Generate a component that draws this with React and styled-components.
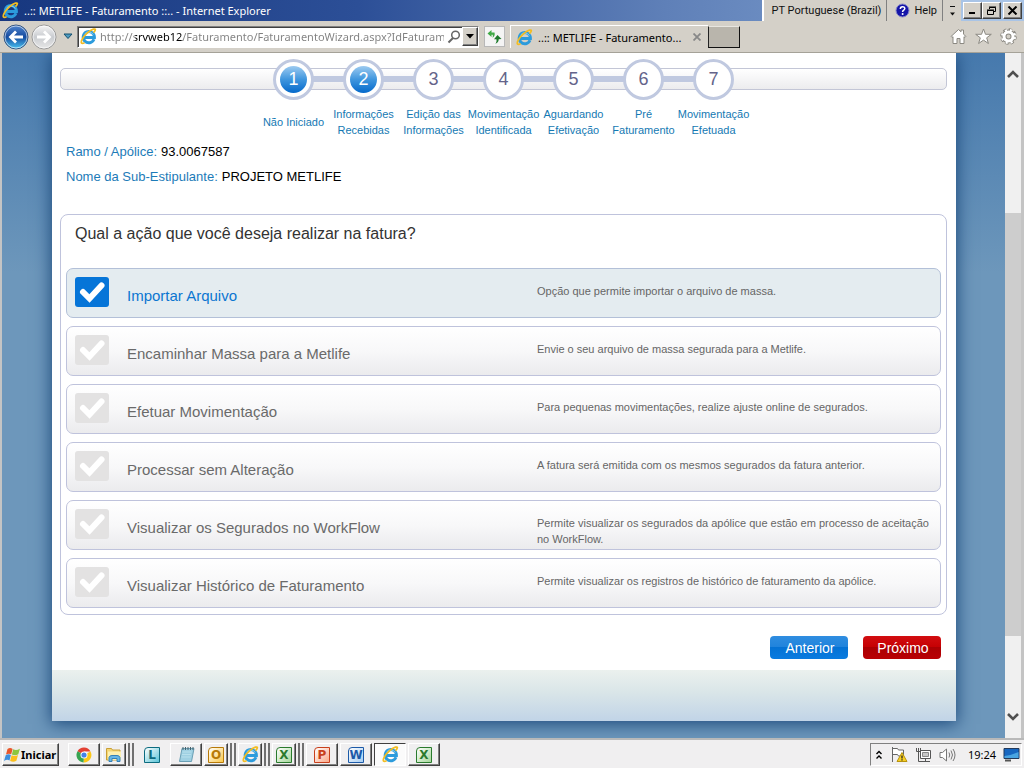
import React from 'react'
import styled, { createGlobalStyle, css } from 'styled-components'

const GlobalStyle = createGlobalStyle`
  * {
    box-sizing: border-box;
  }
  body {
    margin: 0;
    font-family: 'Liberation Sans', Arial, sans-serif;
    background: #d4d0c8;
  }
  button,
  input {
    font-family: inherit;
    margin: 0;
  }
  svg {
    display: block;
    flex: none;
  }
`

const chromeFont = css`
  font-family: 'Noto Sans', 'Open Sans', sans-serif;
  font-size: 11px;
`

const raised = css`
  border: 1px solid;
  border-color: #fff #404040 #404040 #fff;
  box-shadow: inset -1px -1px 0 #808080;
`

const Screen = styled.div`
  min-height: 100vh;
  display: flex;
  flex-direction: column;
`

/* Browser window */

const TitleBar = styled.header`
  height: 21px;
  display: flex;
  background: linear-gradient(90deg, #17377f, #2c4f97 35%, #5f80b8 65%, #88a9d6);
`

const WindowTitle = styled.div`
  ${chromeFont};
  flex: 1;
  display: flex;
  align-items: center;
  gap: 5px;
  padding-left: 2px;
  color: #fff;
  white-space: nowrap;
`

const LanguageBar = styled.div`
  display: flex;
  background: #d4d0c8;
  border-left: 2px solid #fff;
  font-family: Roboto, sans-serif;
  white-space: nowrap;
`

const LanguageItem = styled.button`
  display: flex;
  align-items: center;
  gap: 4px;
  padding: 0 5px 0 8px;
  border: 0;
  border-right: 1px solid #808080;
  background: none;
  font-size: 11px;
  color: #111;
`

const LanguageGrip = styled.button`
  width: 18px;
  display: grid;
  place-items: center;
  padding: 0;
  border: 0;
  background: none;
`

const WindowButtons = styled.div`
  display: flex;
  align-items: center;
  padding: 0 2px;
  background: #a9c4e6;
`

const WindowButton = styled.button`
  ${raised};
  width: 19px;
  height: 17px;
  display: grid;
  place-items: center;
  padding: 0;
  background: #d4d0c8;
  margin-left: ${p => (p.$apart ? '2px' : 0)};
`

const Toolbar = styled.div`
  ${chromeFont};
  height: 32px;
  display: flex;
  align-items: center;
  padding: 0 7px 0 2px;
  background: #d4d0c8;
  border-bottom: 1px solid #a5a298;
`

const NavButton = styled.button`
  width: 28px;
  height: 28px;
  padding: 0;
  border: 0;
  background: none;
`

const HistoryButton = styled.button`
  width: 19px;
  display: grid;
  place-items: center;
  padding: 0;
  border: 0;
  background: none;
`

const AddressBar = styled.div`
  flex: 0 1 402px;
  min-width: 0;
  height: 22px;
  display: flex;
  align-items: center;
  padding-left: 2px;
  background: #fff;
  border: 1px solid #808080;
  border-right-color: #fff;
  border-bottom-color: #fff;
  box-shadow: inset 1px 1px 0 #404040;
`

const AddressInput = styled.input`
  flex: 1;
  min-width: 0;
  height: 18px;
  margin: 0 2px 0 3px;
  padding: 0;
  border: 0;
  outline: 0;
  font-size: 11px;
  color: #777;
  background: linear-gradient(90deg, #808080 35px, #000 35px 83px, #808080 83px);
  background-clip: text;
  -webkit-text-fill-color: transparent;
`

const AddressButton = styled.button`
  ${raised};
  width: 16px;
  height: 19px;
  display: grid;
  place-items: center;
  padding: 0;
  background: #d4d0c8;
`

const PlainAddressButton = styled(AddressButton)`
  border: 0;
  box-shadow: none;
  background: none;
`

const RefreshButton = styled.button`
  width: 21px;
  height: 21px;
  display: grid;
  place-items: center;
  margin: 0 5px;
  padding: 0;
  border: 1px solid #b8b8b8;
  background: #f4f4f4;
`

const Tab = styled.div`
  width: 198px;
  height: 23px;
  display: flex;
  align-items: center;
  gap: 5px;
  padding: 0 7px 0 5px;
  border-top: 1px solid #fff;
  border-left: 1px solid #fff;
  color: #000;
  white-space: nowrap;
`

const TabTitle = styled.span`
  flex: 1;
`

const CloseTab = styled.button`
  padding: 0;
  border: 0;
  background: none;
`

const NewTab = styled.button`
  width: 32px;
  height: 22px;
  background: #b9b5ac;
  border: 1px solid;
  border-color: #e8e6e0 #111 #111 #222;
`

const ToolbarIcons = styled.div`
  display: flex;
  gap: 8px;
  margin-left: auto;
`

const IconButton = styled.button`
  padding: 0;
  border: 0;
  background: none;
`

const Viewport = styled.div`
  flex: 1;
  display: flex;
  border: solid #c4c4c4;
  border-width: 0 3px 0 2px;
`

const Backdrop = styled.main`
  flex: 1;
  min-width: 0;
  display: flex;
  padding: 0 49px 17px 50px;
  overflow: hidden;
  background: linear-gradient(#4679ad, #6d97bb 220px);
`

const ScrollBar = styled.div`
  width: 16px;
  display: flex;
  flex-direction: column;
  align-items: center;
  padding: 16px 0;
  background: #f0f0f0;
`

const ScrollTrack = styled.div`
  flex: 1;
  width: 100%;
  display: flex;
  flex-direction: column;
  padding: 134px 0 76px;
`

const ScrollThumb = styled.div`
  flex: 1;
  background: #cdcdcd;
`

/* Page */

const Sheet = styled.div`
  flex: 1;
  min-width: 0;
  display: flex;
  flex-direction: column;
  background: #fff;
  box-shadow: 0 2px 16px 1px #1d4a7c;
`

const SheetBody = styled.div`
  flex: 1;
  padding: 6px 9px 0 8px;
`

const SheetFooter = styled.footer`
  height: 51px;
  background: linear-gradient(#ebf1ee, #d9e5e8 45%, #c1d4e7);
`

const Stepper = styled.nav`
  display: grid;
  > * {
    grid-area: 1 / 1;
  }
`

const StepperBar = styled.div`
  height: 22px;
  margin-top: 9px;
  border: 1px solid #c3c6d6;
  border-radius: 5px;
  background: linear-gradient(#fff, #ececee);
`

const Steps = styled.ol`
  display: flex;
  justify-self: center;
  margin: 0;
  padding: 0;
  list-style: none;
  background: linear-gradient(#c0c9e0, #c0c9e0) no-repeat center 17px / calc(100% - 70px) 6px;
`

const Step = styled.li`
  width: 70px;
  display: flex;
  flex-direction: column;
  align-items: center;
`

const StepRing = styled.span`
  width: 41px;
  height: 41px;
  display: grid;
  place-items: center;
  border: 3px solid #c0c9e0;
  border-radius: 50%;
  background: #fff;
`

const StepNumber = styled.span`
  width: 27px;
  height: 27px;
  display: grid;
  place-items: center;
  border-radius: 50%;
  background: ${p => (p.$done ? 'linear-gradient(#9ccaf0, #3f96de 50%, #0569cb)' : 'none')};
  color: ${p => (p.$done ? '#fff' : '#64648a')};
  font-size: 18px;
`

const StepLabel = styled.span`
  height: 32px;
  margin-top: 6px;
  display: flex;
  align-items: center;
  font-size: 11px;
  line-height: 16px;
  text-align: center;
  white-space: pre;
  color: #1579b3;
`

const Details = styled.dl`
  margin: 1px 6px 25px;
  font-size: 13px;
  line-height: 25px;
`

const Detail = styled.div`
  display: flex;
  gap: 4px;
  dt {
    color: #1c7bb8;
  }
  dd {
    margin: 0;
    color: #000;
  }
`

const Panel = styled.fieldset`
  min-width: 0;
  margin: 0;
  padding: 5px 5px 6px;
  border: 1px solid #bfc3dc;
  border-radius: 8px;
`

const Question = styled.h1`
  margin: 0 9px 20px;
  font-size: 16px;
  font-weight: normal;
  line-height: 28px;
  color: #333;
`

const Options = styled.div`
  display: grid;
  gap: 8px;
`

const Option = styled.label`
  height: 50px;
  display: grid;
  grid-template-columns: 34px 392px 1fr;
  column-gap: 18px;
  padding: 8px;
  border: 1px solid ${p => (p.$selected ? '#b3c0d8' : '#bfc3dc')};
  border-radius: 7px;
  background: ${p => (p.$selected ? '#e4ecf0' : 'linear-gradient(#fff, #f8f8f9 50%, #ebebed)')};
  cursor: pointer;
`

const Tick = styled.span`
  display: grid;
  height: 30px;
  > * {
    grid-area: 1 / 1;
  }
  svg {
    place-self: center;
    pointer-events: none;
    z-index: 1;
  }
`

const TickInput = styled.input`
  appearance: none;
  width: 34px;
  height: 30px;
  border-radius: 3px;
  background: #e3e2e2;
  &:checked {
    background: #0675d8;
  }
`

const OptionName = styled.span`
  padding-top: 9px;
  font-size: 15px;
  line-height: 20px;
  color: ${p => (p.$selected ? '#0b76d1' : '#6a6a6a')};
`

const OptionText = styled.span`
  padding-top: 6px;
  font-size: 11px;
  line-height: 16px;
  color: #666;
`

const Actions = styled.div`
  display: flex;
  justify-content: flex-end;
  gap: 15px;
  padding: 21px 6px 11px;
`

const ActionButton = styled.button`
  width: 78px;
  height: 23px;
  padding: 0 0 0 2px;
  border: 0;
  border-radius: 4px;
  font-size: 14px;
  color: #fff;
  background: ${p =>
    p.$primary
      ? 'linear-gradient(#d20d10, #c50003 50%, #ab0003 50%, #b90004)'
      : 'linear-gradient(#2f8de0, #1f83dc 50%, #0472d4 50%, #0a7be0)'};
  cursor: pointer;
`

/* Task bar */

const TaskBar = styled.footer`
  ${chromeFont};
  height: 30px;
  display: flex;
  align-items: center;
  gap: 2px;
  padding: 2px 2px 1px;
  border-top: 2px solid #b9b9b9;
  background: #f0eff0;
`

const StartButton = styled.button`
  ${raised};
  width: 57px;
  height: 23px;
  display: flex;
  align-items: center;
  gap: 1px;
  margin-right: 7px;
  padding: 0 1px;
  background: #eeedec;
  font-size: 11px;
  font-weight: bold;
  color: #000;
`

const TaskSlot = styled.div`
  width: 32px;
  height: 23px;
  display: flex;
`

const TaskButton = styled.button`
  flex: 1;
  display: grid;
  place-items: center;
  padding: 0;
  border: 1px solid transparent;
  background: none;
  ${p => p.$look === 'raised' && raised};
  ${p =>
    p.$look === 'pressed' &&
    css`
      border-color: #404040 #fff #fff #404040;
      background: #fbfbfb;
    `}
`

const StackEdge = styled.span`
  width: 4px;
  border-right: 2px solid #707070;
`

const OfficeIcon = styled.span`
  width: 16px;
  height: 16px;
  display: grid;
  place-items: center;
  border: 1px solid ${p => p.$color};
  border-radius: 4px 0 0 0;
  background: linear-gradient(135deg, #fff, ${p => p.$tint});
  color: ${p => p.$color};
  font-family: 'DejaVu Sans', sans-serif;
  font-size: 12px;
  font-weight: bold;
  line-height: 14px;
`

const Tray = styled.div`
  height: 23px;
  display: flex;
  align-items: center;
  gap: 7px;
  margin-left: auto;
  padding: 0 1px 0 4px;
  border: 1px solid;
  border-color: #808080 #fff #fff #808080;
`

const Clock = styled.time`
  margin-left: 5px;
  font-size: 11px;
`

const IeLogo = () => (
  <svg width="17" height="17" viewBox="0 0 17 17" fill="none" aria-hidden="true">
    <path d="M14 11.3A5.6 5.6 0 1 1 14.4 9.4H4.3" stroke="#2c9bdc" strokeWidth="3" />
    <path d="M13.2 6.6A5 5 0 0 0 4.5 6.2" stroke="#8fd3f5" />
    <path
      d="M13.5 4.6C16 1.8 16 .6 13.4 1.2 9.8 2.1 4 7.2 2 11.6c-1.5 3.3-.7 4.7 2.6 3.2"
      stroke="#f3bd22"
      strokeWidth="1.7"
    />
  </svg>
)

const NavArrow = ({ forward }) => {
  const id = forward ? 'nav-forward' : 'nav-back'
  return (
    <svg width="28" height="28" viewBox="0 0 28 28" aria-hidden="true">
      <defs>
        <linearGradient id={id} x2="0" y2="1">
          <stop offset="0" stopColor={forward ? '#f6f6f6' : '#5286cf'} />
          <stop offset=".5" stopColor={forward ? '#c9ccd0' : '#164b9f'} />
          <stop offset="1" stopColor={forward ? '#e8e8e8' : '#4ac6f4'} />
        </linearGradient>
      </defs>
      <circle cx="14" cy="14" r="12" fill={`url(#${id})`} stroke={forward ? '#999' : '#36557f'} />
      <circle cx="14" cy="14" r="11" fill="none" stroke="#fff" strokeOpacity=".6" />
      <path
        d={forward ? 'M7 14h12M14 8.5l5.5 5.5-5.5 5.5' : 'M21 14H9M14 8.5 8.5 14l5.5 5.5'}
        fill="none"
        stroke="#fff"
        strokeWidth="2.8"
      />
    </svg>
  )
}

const Chevron = ({ up }) => (
  <svg width="12" height="10" viewBox="0 0 12 10" aria-hidden="true">
    <path
      d={up ? 'M1 8 6 3l5 5' : 'M1 2l5 5 5-5'}
      fill="none"
      stroke="#505050"
      strokeWidth="2.6"
    />
  </svg>
)

const CheckMark = () => (
  <svg width="28" height="24" viewBox="0 0 28 24" aria-hidden="true">
    <path
      d="M5 12l6.5 6.500L23.500 5.500"
      fill="none"
      stroke="#fff"
      strokeWidth="6"
      strokeLinejoin="miter"
      strokeLinecap="round"
    />
  </svg>
)

const WindowsFlag = () => (
  <svg width="16" height="16" viewBox="0 0 16 16" aria-hidden="true">
    <path d="M3.5 2C5.5.5 7.200 1 8.600 1.900L7.200 7.300C5.700 6.400 4 6.400 2 7.500z" fill="#e9572b" />
    <path d="M9.200 2.300c2 1 4.200.9 6.700-.6L14.300 7.300c-2 1.200-4.200 1.300-6.400.2z" fill="#8cc63f" />
    <path d="M1.700 8.200c2-1.200 3.800-1.100 5.200-.2L5.500 13.500C4 12.600 2.300 12.600 0 13.900z" fill="#3d8fdd" />
    <path d="M7.600 8.300c2 1 4.300 1 6.400-.2l-1.600 5.700c-2 1.200-4.200 1.200-6.300.200z" fill="#fbbf1c" />
  </svg>
)

const ChromeLogo = () => (
  <svg width="16" height="16" viewBox="0 0 16 16" aria-hidden="true">
    <path d="M8 8 1.5 4.200A7.500 7.500 0 0 1 14.500 4.500H8z" fill="#e34133" />
    <path d="M8 8 14.500 4.500A7.500 7.500 0 0 1 7.500 15.500z" fill="#fbc718" />
    <path d="M8 8 7.500 15.500A7.500 7.500 0 0 1 1.500 4.200z" fill="#38a452" />
    <circle cx="8" cy="8" r="3.500" fill="#fff" />
    <circle cx="8" cy="8" r="2.600" fill="#4382e8" />
  </svg>
)

const Folder = () => (
  <svg width="18" height="17" viewBox="0 0 18 17" aria-hidden="true">
    <path d="M1.500 14V2.500h5l1 1.500H15v10z" fill="#f4d674" stroke="#c99f35" />
    <path d="M3 5.500h13V14H3z" fill="#fdf0b0" />
    <path d="M4 15.500v-4a3 3 0 0 1 3-2h5a3 3 0 0 1 3 2v4h-3v-3H7v3z" fill="#65b5e6" stroke="#3580b5" />
  </svg>
)

const Notepad = () => (
  <svg width="17" height="17" viewBox="0 0 17 17" aria-hidden="true">
    <path d="M4 2.500h12L13.500 15.500h-12z" fill="#9fd0e2" stroke="#6ba0b5" />
    <path d="M4.500 6h9M4 8.500h9M3.500 11h9" stroke="#b8e0ec" />
    <path d="M5 1v3M7.500 1v3M10 1v3M12.500 1v3M15 1v3" stroke="#48626c" />
  </svg>
)

const STEPS = [
  { label: 'Não Iniciado', done: true },
  { label: 'Informações\nRecebidas', done: true },
  { label: 'Edição das\nInformações' },
  { label: 'Movimentação\nIdentificada' },
  { label: 'Aguardando\nEfetivação' },
  { label: 'Pré\nFaturamento' },
  { label: 'Movimentação\nEfetuada' },
]

const OPTIONS = [
  { name: 'Importar Arquivo', text: 'Opção que permite importar o arquivo de massa.' },
  {
    name: 'Encaminhar Massa para a Metlife',
    text: 'Envie o seu arquivo de massa segurada para a Metlife.',
  },
  {
    name: 'Efetuar Movimentação',
    text: 'Para pequenas movimentações, realize ajuste online de segurados.',
  },
  {
    name: 'Processar sem Alteração',
    text: 'A fatura será emitida com os mesmos segurados da fatura anterior.',
  },
  {
    name: 'Visualizar os Segurados no WorkFlow',
    text: 'Permite visualizar os segurados da apólice que estão em processo de aceitação no WorkFlow.',
  },
  {
    name: 'Visualizar Histórico de Faturamento',
    text: 'Permite visualizar os registros de histórico de faturamento da apólice.',
  },
]

const TASKS = [
  { name: 'Chrome', icon: <ChromeLogo />, look: 'raised' },
  { name: 'Explorer', icon: <Folder />, look: 'raised', stack: true },
  { name: 'Lync', icon: <OfficeIcon $color="#0c6c80" $tint="#5cc5d8">L</OfficeIcon> },
  { name: 'Notepad', icon: <Notepad />, look: 'raised' },
  {
    name: 'Outlook',
    icon: <OfficeIcon $color="#b87a08" $tint="#fbc94b">O</OfficeIcon>,
    look: 'raised',
    stack: true,
  },
  { name: 'Internet Explorer', icon: <IeLogo />, look: 'raised', stack: true },
  {
    name: 'Excel',
    icon: <OfficeIcon $color="#2a7a2d" $tint="#a5d79a">X</OfficeIcon>,
    look: 'raised',
    stack: true,
  },
  {
    name: 'PowerPoint',
    icon: <OfficeIcon $color="#c8401c" $tint="#fba98a">P</OfficeIcon>,
    look: 'raised',
  },
  { name: 'Word', icon: <OfficeIcon $color="#1c5aa8" $tint="#a6cdf2">W</OfficeIcon>, look: 'raised' },
  { name: 'METLIFE - Faturamento', icon: <IeLogo />, look: 'pressed' },
  {
    name: 'Excel 2',
    icon: <OfficeIcon $color="#2a7a2d" $tint="#a5d79a">X</OfficeIcon>,
    look: 'raised',
  },
]

const BrowserHeader = () => (
  <>
    <TitleBar>
      <WindowTitle>
        <IeLogo />
        ..:: METLIFE - Faturamento ::.. - Internet Explorer
      </WindowTitle>
      <LanguageBar>
        <LanguageItem>PT Portuguese (Brazil)</LanguageItem>
        <LanguageItem>
          <svg width="15" height="15" viewBox="0 0 15 15" aria-hidden="true">
            <circle cx="7.5" cy="7.5" r="6.5" fill="#1414a8" stroke="#8888c8" />
            <path
              d="M5.300 6c0-3 4.500-3 4.500-.4 0 1.600-2.200 1.500-2.200 3.300"
              fill="none"
              stroke="#fff"
              strokeWidth="1.5"
            />
            <circle cx="7.6" cy="11" r="1" fill="#fff" />
          </svg>
          Help
        </LanguageItem>
        <LanguageGrip aria-label="Options">
          <svg width="7" height="12" viewBox="0 0 7 12" aria-hidden="true">
            <path d="M1 1.500h5" stroke="#111" />
            <path d="M1 7.500h5L3.500 10.500z" fill="#111" />
          </svg>
        </LanguageGrip>
      </LanguageBar>
      <WindowButtons>
        <WindowButton aria-label="Minimize">
          <svg width="11" height="9" viewBox="0 0 11 9">
            <path d="M2 7h6" stroke="#000" strokeWidth="2" />
          </svg>
        </WindowButton>
        <WindowButton aria-label="Restore">
          <svg width="11" height="10" viewBox="0 0 11 10" fill="none" stroke="#000">
            <path d="M3.500 3V1.500h6v4H8M3 1h7M1.500 4.500h6v4h-6zM1 4h7" />
          </svg>
        </WindowButton>
        <WindowButton aria-label="Close" $apart>
          <svg width="11" height="9" viewBox="0 0 11 9">
            <path d="M1.500.5l8 8M9.500.5l-8 8" stroke="#000" strokeWidth="2" />
          </svg>
        </WindowButton>
      </WindowButtons>
    </TitleBar>
    <Toolbar>
      <NavButton aria-label="Back">
        <NavArrow />
      </NavButton>
      <NavButton aria-label="Forward">
        <NavArrow forward />
      </NavButton>
      <HistoryButton aria-label="Recent pages">
        <svg width="10" height="7" viewBox="0 0 10 7">
          <path d="M1 1h8L5 5.500z" fill="#4d9bc0" stroke="#14506f" />
        </svg>
      </HistoryButton>
      <AddressBar>
        <IeLogo />
        <AddressInput
          aria-label="Address"
          defaultValue="http://srvweb12/Faturamento/FaturamentoWizard.aspx?IdFaturamento"
        />
        <PlainAddressButton aria-label="Search">
          <svg width="14" height="14" viewBox="0 0 14 14" fill="none" stroke="#666">
            <circle cx="8.500" cy="5" r="3.800" strokeWidth="1.5" />
            <path d="M6 8 1.500 12.500" strokeWidth="2" />
          </svg>
        </PlainAddressButton>
        <AddressButton aria-label="Show addresses">
          <svg width="8" height="5" viewBox="0 0 8 5">
            <path d="M0 0h8L4 4.500z" />
          </svg>
        </AddressButton>
      </AddressBar>
      <RefreshButton aria-label="Refresh">
        <svg width="15" height="14" viewBox="0 0 15 14" aria-hidden="true">
          <path d="M4.500 0 .5 3.500l4 3.500V4.700h1.200c.3 1 .2 2-.2 3 2-1.200 2.700-3 2-5.300h-3z" fill="#3faa45" />
          <path d="M10.500 5l4 4-2.800.2c0 2.300-1 3.800-3.400 4.600 1.200-1.500 1.500-3 1.100-4.600H7z" fill="#1d7a2b" />
        </svg>
      </RefreshButton>
      <Tab>
        <IeLogo />
        <TabTitle>..:: METLIFE - Faturamento...</TabTitle>
        <CloseTab aria-label="Close tab">
          <svg width="8" height="8" viewBox="0 0 8 8">
            <path d="M.5.5l7 7M7.500.5l-7 7" stroke="#888" strokeWidth="1.8" />
          </svg>
        </CloseTab>
      </Tab>
      <NewTab aria-label="New tab" />
      <ToolbarIcons>
        <IconButton aria-label="Home">
          <svg width="17" height="17" viewBox="0 0 17 17">
            <path
              d="M1 8.500 8.500 1.500l2.500 2.300V2h2.500v4.200L16 8.500l-1 1-1-.8V15.500h-4v-5H7v5H3V8.700l-1 .8z"
              fill="#fff"
              stroke="#8b8982"
            />
          </svg>
        </IconButton>
        <IconButton aria-label="Favorites">
          <svg width="17" height="17" viewBox="0 0 17 17">
            <path
              d="M8.500 1l2 5.300h5.800l-4.600 3.500 1.700 5.700-4.900-3.400-4.900 3.400 1.700-5.700L.7 6.300h5.800z"
              fill="#fff"
              stroke="#8b8982"
            />
          </svg>
        </IconButton>
        <IconButton aria-label="Tools">
          <svg width="17" height="17" viewBox="0 0 17 17" fill="none">
            <circle cx="8.5" cy="8.5" r="4.5" stroke="#8b8982" strokeWidth="5" />
            <circle
              cx="8.5"
              cy="8.5"
              r="6.8"
              stroke="#8b8982"
              strokeWidth="3"
              strokeDasharray="3.2 2.14"
            />
            <circle
              cx="8.5"
              cy="8.5"
              r="6.4"
              stroke="#fff"
              strokeWidth="2.4"
              strokeDasharray="2 3.03"
              strokeDashoffset="-.6"
            />
            <circle cx="8.5" cy="8.5" r="4.5" stroke="#fff" strokeWidth="3" />
          </svg>
        </IconButton>
      </ToolbarIcons>
    </Toolbar>
  </>
)

const Wizard = () => {
  const [selected, setSelected] = React.useState(0)
  return (
    <Sheet>
      <SheetBody>
        <Stepper aria-label="Etapas">
          <StepperBar />
          <Steps>
            {STEPS.map((step, i) => (
              <Step key={i}>
                <StepRing>
                  <StepNumber $done={step.done}>{i + 1}</StepNumber>
                </StepRing>
                <StepLabel>{step.label}</StepLabel>
              </Step>
            ))}
          </Steps>
        </Stepper>
        <Details>
          <Detail>
            <dt>Ramo / Apólice:</dt>
            <dd>93.0067587</dd>
          </Detail>
          <Detail>
            <dt>Nome da Sub-Estipulante:</dt>
            <dd>PROJETO METLIFE</dd>
          </Detail>
        </Details>
        <Panel aria-labelledby="question">
          <Question id="question">Qual a ação que você deseja realizar na fatura?</Question>
          <Options>
            {OPTIONS.map((option, i) => (
              <Option key={option.name} $selected={i === selected}>
                <Tick>
                  <TickInput
                    type="radio"
                    name="action"
                    checked={i === selected}
                    onChange={() => setSelected(i)}
                  />
                  <CheckMark />
                </Tick>
                <OptionName $selected={i === selected}>{option.name}</OptionName>
                <OptionText>{option.text}</OptionText>
              </Option>
            ))}
          </Options>
        </Panel>
        <Actions>
          <ActionButton type="button">Anterior</ActionButton>
          <ActionButton type="button" $primary>
            Próximo
          </ActionButton>
        </Actions>
      </SheetBody>
      <SheetFooter />
    </Sheet>
  )
}

const SystemTray = () => (
  <Tray>
    <svg width="8" height="10" viewBox="0 0 8 10" fill="none" stroke="#000" strokeWidth="1.4">
      <path d="M1.500 4 4 1.500 6.500 4M1.500 8.500 4 6l2.500 2.500" />
    </svg>
    <svg width="18" height="17" viewBox="0 0 18 17" aria-hidden="true">
      <path d="M2.500 1v15M2.500 2.500h5l1 1.500h5v6h-5l-1-1.500h-5" fill="#fff" stroke="#666" />
      <path d="M12 6.500l5 9H7z" fill="#f8cf22" stroke="#b8930e" />
      <path d="M12 9.500v3M12 13.300v1.200" stroke="#222" strokeWidth="1.3" />
    </svg>
    <svg width="17" height="16" viewBox="0 0 17 16" fill="none" stroke="#555" aria-hidden="true">
      <path d="M5.500 3.500h10v8h-10z" fill="#fff" />
      <path d="M7.500 5.500h6v4h-6z" fill="#c8c8c8" stroke="#888" />
      <path d="M7 14.500h8M10.500 12v2" />
      <path d="M1.500 1v3.500h4V1M3.500 1v3M3.500 5v9.500H7" />
    </svg>
    <svg width="17" height="16" viewBox="0 0 17 16" fill="none" stroke="#777" aria-hidden="true">
      <path d="M1 5.500h2.500L7.500 2v12l-4-3.500H1z" fill="#fff" />
      <path d="M10 5.500q1.500 2.500 0 5M12 3.500q3 4.500 0 9M14 2q4 6 0 12" />
    </svg>
    <Clock>19:24</Clock>
    <svg width="17" height="15" viewBox="0 0 17 15" aria-hidden="true">
      <path d="M1 1.500h15v10H1z" fill="#1766c0" stroke="#23395a" />
      <path d="M1.500 9Q9 8 15.500 5v6h-14z" fill="#49a4e2" />
      <path d="M2 13.500h6" stroke="#555" strokeWidth="2" />
    </svg>
  </Tray>
)

export default function App () {
  return (
    <Screen>
      <GlobalStyle />
      <BrowserHeader />
      <Viewport>
        <Backdrop>
          <Wizard />
        </Backdrop>
        <ScrollBar>
          <Chevron up />
          <ScrollTrack>
            <ScrollThumb />
          </ScrollTrack>
          <Chevron />
        </ScrollBar>
      </Viewport>
      <TaskBar>
        <StartButton>
          <WindowsFlag />
          Iniciar
        </StartButton>
        {TASKS.map(task => (
          <TaskSlot key={task.name}>
            <TaskButton $look={task.look} aria-label={task.name}>
              {task.icon}
            </TaskButton>
            {task.stack && (
              <>
                <StackEdge />
                <StackEdge />
              </>
            )}
          </TaskSlot>
        ))}
        <SystemTray />
      </TaskBar>
    </Screen>
  )
}
